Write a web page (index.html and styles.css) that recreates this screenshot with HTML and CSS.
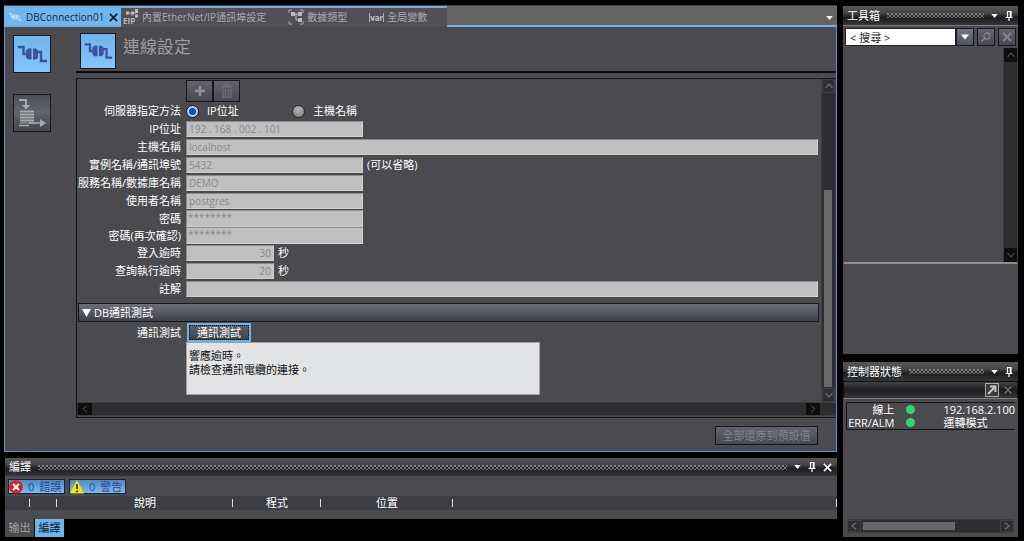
FILE: index.html
```html
<!DOCTYPE html>
<html lang="zh-TW">
<head>
    <meta charset="utf-8">
    <title>DBConnection01</title>
    <link rel="stylesheet" href="styles.css">
</head>
<body>
    <svg class="defs" aria-hidden="true">
        <symbol id="i-db" viewBox="0 0 36 36">
            <path d="M4 11h5.500v7h4M23 16h4v9h6" fill="none" stroke="currentColor" stroke-width="2.400"/>
            <path d="M17.500 12.500v11H14l-2-2v-7l2-2zM19 12.500h3l2 2v7l-2 2h-3z" fill="currentColor"/>
        </symbol>
        <symbol id="i-down" viewBox="0 0 8 5"><path d="M0 0h8L4 5z" fill="currentColor"/></symbol>
        <symbol id="i-pin" viewBox="0 0 8 10"><path d="M2.500 6V.500h3.500V6M5.300.500V6M.500 6.500h7M4 6.500V10" fill="none" stroke="currentColor" stroke-width="1.200"/></symbol>
        <symbol id="i-x" viewBox="0 0 10 10"><path d="M1 1l8 8M9 1L1 9" fill="none" stroke="currentColor" stroke-width="1.800"/></symbol>
        <symbol id="i-up" viewBox="0 0 8 8"><path d="M.500 6L4 2l3.500 4" fill="none" stroke="currentColor" stroke-width="1.200"/></symbol>
        <symbol id="i-dn" viewBox="0 0 8 8"><path d="M.500 2L4 6l3.500-4" fill="none" stroke="currentColor" stroke-width="1.200"/></symbol>
        <symbol id="i-lt" viewBox="0 0 8 8"><path d="M6 .500L2 4l4 3.500" fill="none" stroke="currentColor" stroke-width="1.200"/></symbol>
        <symbol id="i-rt" viewBox="0 0 8 8"><path d="M2 .500L6 4 2 7.500" fill="none" stroke="currentColor" stroke-width="1.200"/></symbol>
    </svg>

    <div class="app">
        <div class="left">
            <main class="editor">
                <nav class="tabs">
                    <div class="tab active">
                        <svg class="tab-icon" width="16" height="16"><use href="#i-db"/></svg>
                        <a href="#">DBConnection01</a>
                        <button class="close" aria-label="關閉"><svg width="9" height="9"><use href="#i-x"/></svg></button>
                    </div>
                    <div class="tab">
                        <svg width="16" height="16" viewBox="0 0 16 16">
                            <path d="M4 4h9M9 4v3" stroke="#aaa" stroke-width="1" fill="none"/>
                            <path d="M3 2.500h3v3H3zM8 2.500h3v3H8zM12 0h3v4h-3zM12 5.500h3v3h-3z" fill="#bbb"/>
                            <text x="0" y="15" class="eip">EIP</text>
                        </svg>
                        <a href="#">內置EtherNet/IP通訊埠設定</a>
                    </div>
                    <div class="tab">
                        <svg width="16" height="16" viewBox="0 0 16 16">
                            <path d="M1 4V1h3M12 1h3v3M1 12v3h3M12 15h3v-3" stroke="#aaa" fill="none"/>
                            <path d="M4 5h7M8 5v6h3" stroke="#bbb" fill="none"/>
                            <path d="M3 3h4v4H3zM10 3h4v4h-4zM10 9h4v4h-4z" fill="#bbb"/>
                        </svg>
                        <a href="#">數據類型</a>
                    </div>
                    <div class="tab">
                        <span class="var">var</span>
                        <a href="#">全局變數</a>
                    </div>
                    <div class="tab-rest"><button class="bare" aria-label="分頁清單"><svg width="7" height="4"><use href="#i-down"/></svg></button></div>
                </nav>

                <div class="work">
                    <aside class="side">
                        <button class="side-btn on" aria-label="連線設定"><svg width="36" height="36"><use href="#i-db"/></svg></button>
                        <button class="side-btn" aria-label="輸出設定">
                            <svg width="36" height="36" viewBox="0 0 36 36">
                                <path d="M5 5h7v6" fill="none" stroke="#a9a9ab" stroke-width="2"/>
                                <path d="M8 10h8l-4 4.500zM26 24v8l6-4z" fill="#a9a9ab"/>
                                <path d="M6 15h14v14H6z" fill="#77787c"/>
                                <path d="M6 16.500h14M6 19.500h14M6 22.500h14M6 25.500h14M5 30.500h10M15 28h12" stroke="#a9a9ab" stroke-width="1.600"/>
                            </svg>
                        </button>
                    </aside>

                    <section class="content">
                        <header class="page-head">
                            <svg class="head-icon" width="36" height="36"><use href="#i-db"/></svg>
                            <h1>連線設定</h1>
                        </header>

                        <div class="pane">
                            <form class="form">
                                <div class="tools">
                                    <button type="button" class="tool" aria-label="新增"><svg width="12" height="12" viewBox="0 0 12 12"><path d="M6 1v10M1 6h10" stroke="#8d8d92" stroke-width="2.500"/></svg></button>
                                    <button type="button" class="tool" aria-label="刪除"><svg width="12" height="14" viewBox="0 0 12 14"><path d="M1 3h10M4 3V1h4v2M2 5v8h8V5M4.500 5v7M7.500 5v7" fill="none" stroke="#6d6d73" stroke-width="1.300"/></svg></button>
                                </div>
                                <div class="row radios">
                                    <span class="label">伺服器指定方法</span>
                                    <label class="radio"><input type="radio" name="method" checked>IP位址</label>
                                    <label class="radio"><input type="radio" name="method">主機名稱</label>
                                </div>
                                <div class="row"><label class="label" for="ip">IP位址</label><input class="box mid" id="ip" value="192 . 168 . 002 . 101" disabled></div>
                                <div class="row"><label class="label" for="host">主機名稱</label><input class="box wide" id="host" value="localhost" disabled></div>
                                <div class="row"><label class="label" for="port">實例名稱/通訊埠號</label><input class="box mid" id="port" value="5432" disabled><span class="unit">(可以省略)</span></div>
                                <div class="row"><label class="label" for="db">服務名稱/數據庫名稱</label><input class="box mid" id="db" value="DEMO" disabled></div>
                                <div class="row"><label class="label" for="user">使用者名稱</label><input class="box mid" id="user" value="postgres" disabled></div>
                                <div class="row secret"><label class="label" for="pw">密碼</label><input class="box mid" id="pw" value="********" disabled></div>
                                <div class="row secret"><label class="label" for="pw2">密碼(再次確認)</label><input class="box mid" id="pw2" value="********" disabled></div>
                                <div class="row"><label class="label" for="login">登入逾時</label><input class="box num" id="login" value="30" disabled><span class="unit">秒</span></div>
                                <div class="row"><label class="label" for="query">查詢執行逾時</label><input class="box num" id="query" value="20" disabled><span class="unit">秒</span></div>
                                <div class="row"><label class="label" for="note">註解</label><input class="box wide" id="note" disabled></div>

                                <h2 class="section"><svg width="9" height="8" viewBox="0 0 9 8"><path d="M0 0h9L4.500 8z" fill="#fff"/></svg>DB通訊測試</h2>

                                <div class="row test">
                                    <span class="label">通訊測試</span>
                                    <button type="button" class="test-btn">通訊測試</button>
                                </div>
                                <textarea class="result" aria-label="測試結果" readonly>響應逾時。
請檢查通訊電纜的連接。</textarea>
                            </form>
                            <div class="vbar">
                                <span class="arrow lit"><svg width="8" height="8"><use href="#i-up"/></svg></span>
                                <span class="track"><span class="thumb"></span></span>
                                <span class="arrow lit"><svg width="8" height="8"><use href="#i-dn"/></svg></span>
                            </div>
                            <div class="hbar">
                                <span class="arrow"><svg width="8" height="8"><use href="#i-lt"/></svg></span>
                                <span class="track"></span>
                                <span class="arrow"><svg width="8" height="8"><use href="#i-rt"/></svg></span>
                            </div>
                        </div>

                        <footer class="foot"><button class="reset" disabled>全部還原到預設值</button></footer>
                    </section>
                </div>
            </main>

            <section class="build">
                <header class="title">
                    <h3>編譯</h3><span class="dots"></span>
                    <button class="bare" aria-label="選單"><svg width="7" height="4"><use href="#i-down"/></svg></button>
                    <button class="bare" aria-label="釘選"><svg width="8" height="10"><use href="#i-pin"/></svg></button>
                    <button class="bare" aria-label="關閉"><svg width="9" height="9"><use href="#i-x"/></svg></button>
                </header>
                <div class="counts">
                    <button class="count">
                        <svg width="14" height="14" viewBox="0 0 14 14"><circle cx="7" cy="7" r="6.800" fill="#d3202c"/><path d="M4 4l6 6M10 4l-6 6" stroke="#fff" stroke-width="2.200"/></svg>
                        <span>0</span><span>錯誤</span>
                    </button>
                    <button class="count">
                        <svg width="14" height="14" viewBox="0 0 14 14"><path d="M7 0l7 13.500H0z" fill="#f7e414"/><path d="M7 4v5M7 10.500v1.800" stroke="#222" stroke-width="1.600"/></svg>
                        <span>0</span><span>警告</span>
                    </button>
                </div>
                <table class="list">
                    <tr><th class="c1"></th><th class="c2"></th><th class="c3">說明</th><th class="c4">程式</th><th class="c5">位置</th><th></th></tr>
                </table>
            </section>

            <nav class="bottom-tabs">
                <button>输出</button>
                <button class="on">編譯</button>
            </nav>
        </div>

        <div class="right">
            <section class="toolbox">
                <header class="title">
                    <h3>工具箱</h3><span class="dots"></span>
                    <button class="bare" aria-label="選單"><svg width="7" height="4"><use href="#i-down"/></svg></button>
                    <button class="bare" aria-label="釘選"><svg width="8" height="10"><use href="#i-pin"/></svg></button>
                </header>
                <div class="search">
                    <input value="&lt; 搜尋 &gt;" aria-label="搜尋">
                    <button class="drop" aria-label="展開"><svg width="8" height="6"><use href="#i-down"/></svg></button>
                    <button class="sq" aria-label="搜尋"><svg width="10" height="10" viewBox="0 0 10 10"><circle cx="6" cy="4" r="3" fill="none" stroke="#85858b" stroke-width="1.300"/><path d="M4 6L.500 9.500" stroke="#85858b" stroke-width="1.500"/></svg></button>
                    <button class="sq" aria-label="清除"><svg width="10" height="10"><use href="#i-x"/></svg></button>
                </div>
                <div class="tool-list">
                    <div class="vbar">
                        <span class="arrow"><svg width="8" height="8"><use href="#i-up"/></svg></span>
                        <span class="track"></span>
                        <span class="arrow"><svg width="8" height="8"><use href="#i-dn"/></svg></span>
                    </div>
                </div>
                <div class="help"></div>
            </section>

            <section class="status">
                <header class="title">
                    <h3>控制器狀態</h3><span class="dots"></span>
                    <button class="bare" aria-label="選單"><svg width="7" height="4"><use href="#i-down"/></svg></button>
                    <button class="bare" aria-label="釘選"><svg width="8" height="10"><use href="#i-pin"/></svg></button>
                </header>
                <div class="status-bar">
                    <button class="pop" aria-label="彈出"><svg width="10" height="10" viewBox="0 0 10 10"><path d="M1 9l6-6M3 1.500h5.500V7" fill="none" stroke="#ccc" stroke-width="1.800"/></svg></button>
                    <button class="bare dim" aria-label="關閉"><svg width="8" height="8"><use href="#i-x"/></svg></button>
                </div>
                <table class="state">
                    <tr><th>線上</th><td class="lamp"><i></i></td><td>192.168.2.100</td></tr>
                    <tr><th>ERR/ALM</th><td class="lamp"><i></i></td><td>運轉模式</td></tr>
                </table>
                <div class="hbar">
                    <span class="arrow lit"><svg width="8" height="8"><use href="#i-lt"/></svg></span>
                    <span class="track"><span class="thumb"></span></span>
                    <span class="arrow lit"><svg width="8" height="8"><use href="#i-rt"/></svg></span>
                </div>
            </section>
        </div>
    </div>
</body>
</html>
```
FILE: styles.css
```css
* { box-sizing: border-box; }
body { margin: 0; background: #000; color: #fff; font: 11px/14px "Open Sans", "Noto Sans CJK TC", sans-serif; }
button, input, textarea { font: inherit; color: inherit; margin: 0; padding: 0; border: 0; border-radius: 0; }
button { display: flex; align-items: center; justify-content: center; }
a { color: inherit; text-decoration: none; white-space: nowrap; }
h1, h2, h3 { margin: 0; font-weight: normal; }
svg { display: block; flex: none; }
.defs { display: none; }
.bare { background: none; }

.app { display: flex; gap: 6px; height: 100vh; padding: 5px 6px 4px 4px; }
.left { flex: 1; min-width: 0; display: flex; flex-direction: column; }
.right { width: 175px; padding-top: 1px; display: flex; flex-direction: column; gap: 8px; }

/* editor */
.editor { flex: 1; min-height: 0; display: flex; flex-direction: column; background: #4b4a4e; border: solid #5793c9; border-width: 0 1px 1px; margin-bottom: 6px; }
.tabs { display: flex; height: 22px; font-size: 10px; border-top: 1px solid #444; margin: 0 -1px; }
.tab { display: flex; align-items: center; gap: 3px; padding: 0 20px 1px 2px; background: #515155; border-top: 2px solid #6db1ec; color: #a8a8aa; }
.tab.active { gap: 5px; width: 117px; padding: 0 3px 1px; background: #70b5f0; color: #1c2b3a; }
.tab-icon { color: #c3dcf4; }
.tab.active .tab-icon { margin-right: -2px; }
.tab .close { background: none; color: #0d1a26; margin-left: auto; }
.eip { font: bold 8px "Open Sans", sans-serif; fill: #b5b5b5; }
.var { font: bold 8px/9px "Open Sans", sans-serif; color: #c4c4c4; border: solid #aaa; border-width: 0 1px; }
.tab-rest { flex: 1; display: flex; justify-content: flex-end; align-items: center; padding: 4px 4px 0 0; background: #646465; border-bottom: 2px solid #6db1ec; }

.work { flex: 1; min-height: 0; display: flex; }
.side { width: 71px; padding: 8px; display: flex; flex-direction: column; gap: 21px; }
.side-btn { width: 38px; height: 38px; border: 1px solid #16181c; background: linear-gradient(#4c4e54, #62646e 45%, #45474e); color: #3854a0; }
.side-btn.on, .head-icon { background: linear-gradient(#70b4ee, #86c4fb); }
.content { flex: 1; min-width: 0; display: flex; flex-direction: column; }
.page-head { display: flex; gap: 7px; height: 46px; padding: 6px 0 0 4px; border-bottom: 2px solid #0c0c0d; }
.head-icon { border: 1px solid #16181c; color: #3854a0; }
.page-head h1 { font-size: 17px; line-height: 28px; color: #9c9c9f; }

.pane { flex: 1; min-height: 0; margin-top: 5px; display: grid; grid-template: minmax(0, 1fr) 15px / minmax(0, 1fr) 15px; border: 1px solid #151516; border-right: 0; }
.form { min-width: 0; padding: 1px 2px 0 1px; overflow: hidden; }
.tools { display: flex; margin-left: 108px; }
.tool { width: 27px; height: 22px; border: 1px solid #17181b; background: linear-gradient(#62636c, #474850); }
.row { display: flex; align-items: center; height: 18px; }
.label { width: 103px; margin-right: 5px; text-align: right; white-space: nowrap; }
.radio { display: flex; align-items: center; gap: 8px; width: 106px; }
.radio input { appearance: none; width: 13px; height: 13px; border: 1px solid #2a2a2c; border-radius: 50%; background: radial-gradient(circle at 50% 30%, #b5b5b5, #777); }
.radio input:checked { background: radial-gradient(circle, #2447a8 0 3px, #9fd2fa 4px); border-color: #12243a; }
.box { height: 16px; padding: 0 2px; border: 1px solid #8b8b8c; border-right-color: #d0d0d0; border-bottom-color: #d0d0d0; background: #c0c0c0; color: #8a8a8b; font-size: 10px; }
.mid { width: 177px; }
.wide { flex: 1; min-width: 0; margin-right: 1px; }
.num { width: 88px; text-align: right; }
.secret { height: 17px; }
.secret .box { height: 17px; padding: 0 1px 4px; }
.unit { margin-left: 4px; }
.section { display: flex; align-items: center; gap: 3px; height: 19px; margin: 5px 0 1px; padding: 0 3px; font-size: 11px; border: 1px solid #17181b; background: linear-gradient(#6d6e7a, #3f414a); }
.test { height: 19px; }
.test-btn { width: 64px; height: 19px; margin-left: 1px; border: 2px solid #6db1ec; background: linear-gradient(#5c5d68, #42444d); outline: 1px dotted #111; outline-offset: -3px; }
.result { display: block; width: 354px; height: 53px; margin-left: 108px; padding: 6px 2px; border: 1px solid #a2a2a3; background: #e2e3e5; color: #111; resize: none; outline: 0; }
.foot { display: flex; justify-content: flex-end; height: 33px; padding: 8px 18px 6px 0; }
.reset { width: 103px; border: 1px solid #17181b; background: linear-gradient(#62636d, #474952); color: #83848a; }

/* scrollbars */
.vbar, .hbar { display: flex; background: #2e2e30; color: #454547; }
.vbar { flex-direction: column; width: 15px; border: solid #3c3c3e; border-width: 0 1px; }
.hbar { grid-column: 1 / 3; height: 14px; border: solid #3c3c3e; border-width: 1px 0; }
.arrow { display: flex; align-items: center; justify-content: center; flex: 0 0 14px; background: #0e0e0f; }
.arrow.lit { background: #2e2e30; color: #6a6a6c; border: 1px solid #414143; }
.track { flex: 1; display: flex; }
.pane .hbar { padding: 0 16px 0 1px; }
.pane .hbar .arrow { color: #343436; }
.pane .vbar .track { align-items: flex-end; padding: 0 3px 1px 2px; }
.pane .vbar .thumb { width: 100%; height: 67%; background: #69696a; }

/* panels */
.title { display: flex; align-items: center; height: 19px; padding: 0 5px 0 4px; gap: 7px; background: linear-gradient(#565658, #48484a 35%, #1b1d1e 60%, #343638); }
.title h3 { font-size: 11px; }
.dots { flex: 1; height: 5px; background: radial-gradient(circle at 1px 1px, #9a9a9a 1px, transparent 1px) 0 0 / 4px 4px, radial-gradient(circle at 1px 1px, #9a9a9a 1px, transparent 1px) 2px 2px / 4px 4px; opacity: .7; }
.build { background: #4b4a4e; margin-left: 1px; height: 61px; }
.build .title { height: 18px; }
.counts { display: flex; gap: 4px; padding: 3px 3px 0; height: 20px; }
.count { gap: 5px; width: 57px; height: 15px; justify-content: flex-start; border: 1px solid #1a2230; background: linear-gradient(#5389bb, #7cbcf2); color: #2b489b; }
.list { width: 100%; height: 14px; border-collapse: collapse; table-layout: fixed; background: #3d3e43; }
.list th { padding: 0; font-weight: normal; line-height: 14px; background: linear-gradient(#ddd, #ddd) right 3px / 1px 8px no-repeat; }
.c1 { width: 25px; }
.c2 { width: 27px; }
.c3 { width: 176px; }
.c4 { width: 88px; }
.c5 { width: 132px; }
.bottom-tabs { display: flex; gap: 1px; margin-left: 1px; }
.bottom-tabs button { width: 29px; height: 18px; background: #4b4a4e; color: #a0a0a2; }
.bottom-tabs .on { background: #6db4f0; color: #14202c; }

.toolbox { flex: 1; min-height: 0; display: flex; flex-direction: column; background: #4b4a4e; }
.search { display: flex; height: 22px; padding: 2px 2px 1px; border-top: 1px solid #7b7b7d; }
.search input { flex: 1; min-width: 0; height: 18px; padding: 0 4px; border: 1px solid #222; background: #fff; color: #222; }
.search button { width: 18px; height: 18px; border: 1px solid #17181b; background: linear-gradient(#62636c, #474850); }
.search .drop { background: linear-gradient(#74757f, #50525b); }
.search .sq { margin-left: 3px; color: #85858b; }
.tool-list { flex: 217; display: flex; justify-content: flex-end; padding-top: 1px; }
.help { flex: 91; border-top: 2px solid #8f8f91; margin: 0 1px; }

.status { height: 175px; display: flex; flex-direction: column; background: #4b4a4e; }
.status-bar { display: flex; justify-content: flex-end; align-items: center; gap: 5px; height: 18px; padding-right: 5px; border: 1px solid #111; border-bottom-color: #828284; background: linear-gradient(#404244, #1b1d1e 50%, #343638); }
.pop { width: 14px; height: 14px; border: 1px solid #aaa; background: #3a3c3e; }
.dim { color: #6e6e70; }
.state { margin: 3px 3px auto; border-collapse: collapse; border: solid #161617; border-width: 1px 0 1px 1px; white-space: nowrap; }
.state th { width: 48px; padding: 0; font-weight: normal; line-height: 13px; text-align: right; }
.state td { padding: 0; line-height: 13px; }
.state .lamp { width: 50px; padding-left: 12px; }
.lamp i { display: block; width: 9px; height: 9px; border-radius: 50%; background: #2fd573; }
.status .hbar { margin: 0 4px 4px; }
.status .track { padding: 2px 2px; }
.status .thumb { width: 68%; background: #68686a; }
```
